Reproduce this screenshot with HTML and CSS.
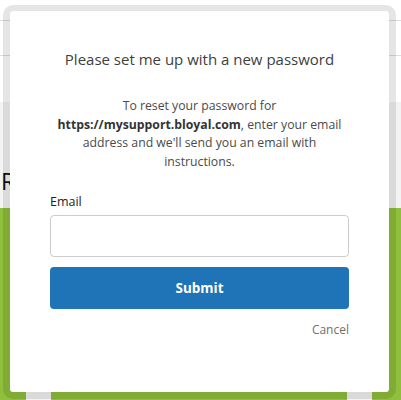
FILE: index.html
```html
<!DOCTYPE html>
<html lang="en">
<head>
    <meta charset="UTF-8">
    <meta name="viewport" content="width=device-width, initial-scale=1.0">
    <title>Forgot Password</title>
    <link rel="stylesheet" href="styles.css">
</head>
<body>
    <div class="page">
        <div class="header">
            <div class="nav-row"></div>
            <div class="nav-row"></div>
        </div>
        <div class="hero">
            <h2 class="hero-title">Reset Password</h2>
        </div>
        <div class="tiles">
            <div class="tile"></div>
            <div class="tile-gap"></div>
            <div class="tile tile-wide"></div>
            <div class="tile-gap"></div>
            <div class="tile"></div>
        </div>
    </div>

    <div class="modal">
        <h1 class="modal-title">Please set me up with a new password</h1>
        <p class="intro">
            To reset your password for <b>https://mysupport.bloyal.com</b>, enter your email address and we'll send you an email with instructions.
        </p>
        <label class="field-label" for="email">Email</label>
        <input type="email" id="email" class="field">
        <button class="submit">Submit</button>
        <div class="actions">
            <a href="#" class="cancel">Cancel</a>
        </div>
    </div>
</body>
</html>
```

FILE: styles.css
```css
body {
    margin: 0;
    padding: 0;
    font-family: "Open Sans", Arial, sans-serif;
    background: #ffffff;
    overflow: hidden;
}
.page {
    height: 400px;
    display: flex;
    flex-direction: column;
}
.header {
    height: 102px;
    padding-top: 20px;
    box-sizing: border-box;
}
.nav-row {
    height: 35px;
    border-top: 1px solid #dddddd;
    box-sizing: border-box;
}
.hero {
    height: 106px;
    background: #f3f3f3;
    padding-top: 66px;
    box-sizing: border-box;
}
.hero-title {
    margin: 0;
    padding-left: 1px;
    width: 10px; /* rest of the heading sits under the modal */
    overflow: hidden;
    white-space: nowrap;
    font-size: 23px;
    font-weight: normal;
    line-height: 26px;
    color: #111111;
}
.tiles {
    flex: 1;
    display: flex;
    background: #8fbf3c;
    padding-top: 30px;
}
.tile {
    width: 26px;
}
.tile-wide {
    width: 296px;
}
.tile-gap {
    width: 25px;
    background: #f3f3f3;
}

/* modal over the page */
.modal {
    position: absolute;
    left: 3px;
    top: 5px;
    width: 299px;
    height: 344px;
    border: 7px solid rgba(0, 0, 0, 0.1);
    border-top-width: 6px;
    border-radius: 10px;
    background: #ffffff;
    background-clip: padding-box;
    padding: 37px 40px 0;
}
.modal-title {
    margin: 0;
    font-size: 15px;
    font-weight: normal;
    line-height: 22px;
    text-align: center;
    color: #3e3e3c;
}
.intro {
    margin: 27px 0 0;
    font-size: 12.25px;
    line-height: 18.7px;
    text-align: center;
    color: #4a4a4a;
}
.intro b {
    color: #333333;
}
.field-label {
    display: block;
    margin-top: 21px;
    font-size: 12.5px;
    font-weight: normal;
    line-height: 18px;
    color: #222222;
}
.field {
    display: block;
    width: 100%;
    height: 42px;
    margin-top: 4px;
    border: 1px solid #cccccc;
    border-radius: 4px;
    box-sizing: border-box;
    font-family: inherit;
}
.submit {
    display: block;
    width: 100%;
    height: 42px;
    margin-top: 10px;
    border: none;
    border-radius: 4px;
    background: #1f73b7;
    color: #ffffff;
    font-family: inherit;
    font-size: 13.5px;
    font-weight: 700;
}
.actions {
    margin-top: 8px;
    text-align: right;
}
.cancel {
    font-size: 12px;
    line-height: 18px;
    color: #706e6b;
    text-decoration: none;
}
```
